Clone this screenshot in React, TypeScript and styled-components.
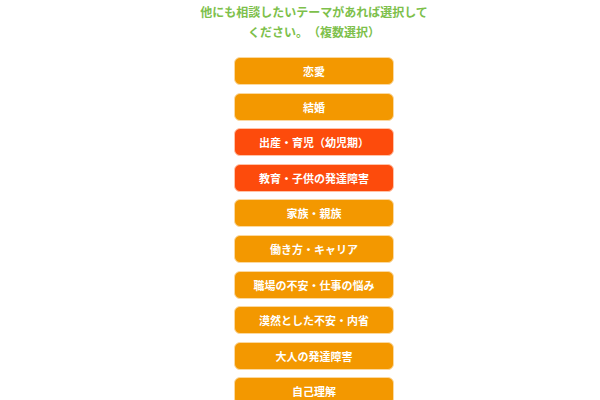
import styled, { createGlobalStyle } from "styled-components";

const GlobalStyle = createGlobalStyle`
  html, body {
    margin: 0;
    padding: 0;
    background: #ffffff;
  }
  body {
    font-family: "Noto Sans CJK JP", "Noto Sans", sans-serif;
    text-spacing-trim: space-all;
  }
`;

const Page = styled.div`
  width: 600px;
  height: 400px;
  overflow: hidden;
  box-sizing: border-box;
  padding-left: 28px;
  display: flex;
  flex-direction: column;
  align-items: center;
`;

const Title = styled.h2`
  margin: 2px 0 0;
  font-size: 12px;
  line-height: 19.5px;
  font-weight: 700;
  color: #7dc04b;
  text-align: center;
`;

const List = styled.div`
  margin-top: 16px;
  display: flex;
  flex-direction: column;
  gap: 7.6px;
`;

const Choice = styled.button<{ $selected?: boolean }>`
  width: 160px;
  height: 28px;
  box-sizing: border-box;
  border: 1px solid ${(p) => (p.$selected ? "#ffc3a8" : "#fbd9a0")};
  border-radius: 6px;
  background: ${(p) => (p.$selected ? "#fd4b0c" : "#f39800")};
  color: #ffffff;
  font-family: "Noto Sans CJK JP", "Noto Sans", sans-serif;
  font-size: 11px;
  font-weight: 700;
  text-spacing-trim: space-all;
  padding: 0;
  display: flex;
  align-items: center;
  justify-content: center;
  cursor: pointer;
`;

const themes = [
  { label: "恋愛", selected: false },
  { label: "結婚", selected: false },
  { label: "出産・育児（幼児期）", selected: true },
  { label: "教育・子供の発達障害", selected: true },
  { label: "家族・親族", selected: false },
  { label: "働き方・キャリア", selected: false },
  { label: "職場の不安・仕事の悩み", selected: false },
  { label: "漠然とした不安・内省", selected: false },
  { label: "大人の発達障害", selected: false },
  { label: "自己理解", selected: false },
];

export default function App() {
  return (
    <>
      <GlobalStyle />
      <Page>
        <Title>
          他にも相談したいテーマがあれば選択して
          <br />
          ください。（複数選択）
        </Title>
        <List>
          {themes.map((item) => (
            <Choice key={item.label} $selected={item.selected}>
              {item.label}
            </Choice>
          ))}
        </List>
      </Page>
    </>
  );
}
